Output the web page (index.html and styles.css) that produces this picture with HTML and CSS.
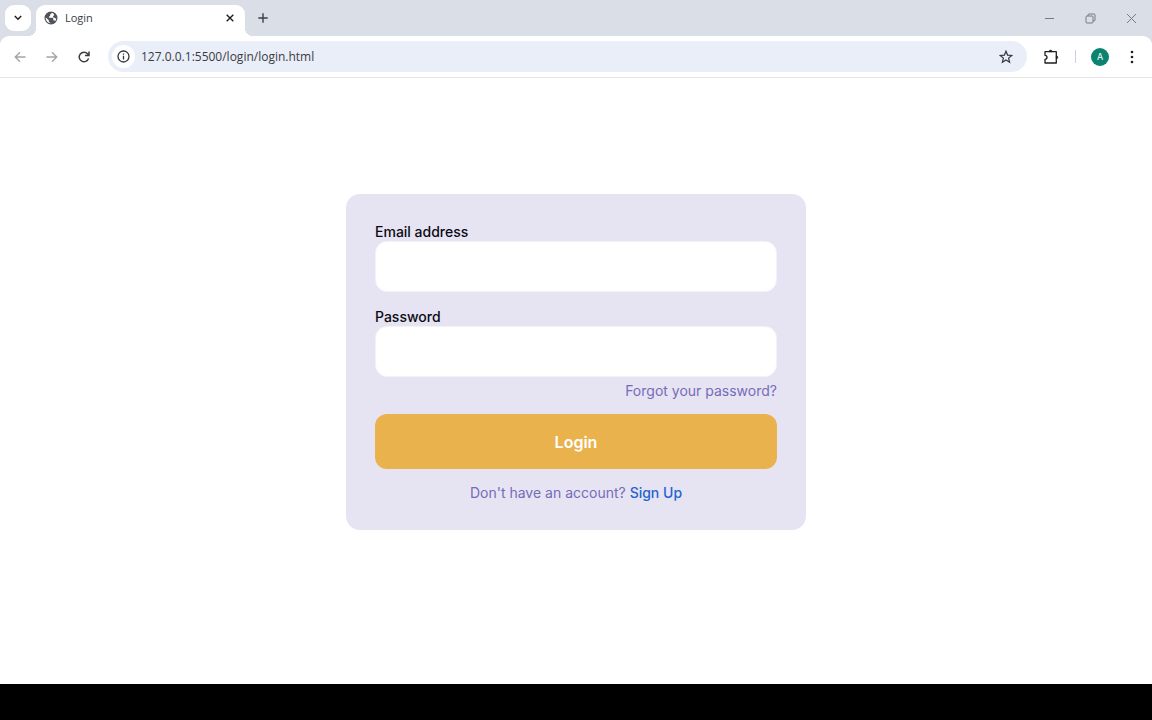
FILE: index.html
```html
<!DOCTYPE html>
<html lang="en">
<head>
<meta charset="utf-8">
<title>Login</title>
<link rel="stylesheet" href="styles.css">
</head>
<body>
<div class="browser">
  <header class="tabstrip">
    <button class="tab-search" aria-label="Search tabs">
      <svg width="8" height="6" viewBox="0 0 8 6" fill="none" stroke="#1f1f1f" stroke-width="1.5"><path d="M.8 1 4 4.2 7.2 1"/></svg>
    </button>
    <div class="tab">
      <svg width="14" height="14" viewBox="0 0 14 14"><circle cx="7" cy="7" r="5.900" fill="#fff" stroke="#505357" stroke-width="1.200"/><path d="M1 7C1 3.500 3.700 1 7.600 1c.3 1.500-.3 2-1.400 2.200v1.300c0 .7-.5.900-1.200.9v1.300h3.200c.7 0 1.100.5 1.100 1.200v1.300c1 0 1.700.2 2.200 1.400C10.300 12.200 8.500 13 7 13c-.7 0-.8-.7-.8-1.500-1 0-1.400-.6-1.400-1.500v-.8L1.300 6ZM9.200 1.600c2.300.9 3.700 2.800 3.800 5.400-.8.900-1.900.7-2.300-.2-.9.100-1.600-.3-1.600-1.200 0-.8.5-1.200 1.200-1.300Z" fill="#505357"/></svg>
      <span class="tab-title">Login</span>
      <button class="icon-btn" aria-label="Close tab">
        <svg width="8" height="8" viewBox="0 0 8 8" stroke="#1f1f1f" stroke-width="1.4"><path d="m.7.7 6.600 6.600M7.300.7.7 7.300"/></svg>
      </button>
    </div>
    <button class="icon-btn new-tab" aria-label="New tab">
      <svg width="10" height="10" viewBox="0 0 10 10" stroke="#3c4043" stroke-width="1.400"><path d="M5 .3v9.400M.3 5h9.400"/></svg>
    </button>
    <div class="window-controls">
      <button class="icon-btn" aria-label="Minimize"><svg width="11" height="11" viewBox="0 0 11 11" stroke="#777b80"><path d="M1 5.500h9"/></svg></button>
      <button class="icon-btn" aria-label="Restore"><svg width="11" height="11" viewBox="0 0 11 11" fill="none" stroke="#777b80"><rect x="1" y="3" width="7" height="7" rx="1"/><path d="M3 3V2a1 1 0 0 1 1-1h5a1 1 0 0 1 1 1v5a1 1 0 0 1-1 1H8"/></svg></button>
      <button class="icon-btn" aria-label="Close"><svg width="11" height="11" viewBox="0 0 11 11" stroke="#777b80"><path d="m1 1 9 9M10 1l-9 9"/></svg></button>
    </div>
  </header>
  <nav class="toolbar">
    <div class="nav-buttons">
      <button class="icon-btn" aria-label="Back"><svg width="12" height="12" viewBox="0 0 12 12" fill="none" stroke="#a2a4a7" stroke-width="1.300"><path d="M11.500 6H1.500M6 1.200 1.200 6 6 10.800"/></svg></button>
      <button class="icon-btn" aria-label="Forward"><svg width="12" height="12" viewBox="0 0 12 12" fill="none" stroke="#a2a4a7" stroke-width="1.300"><path d="M.5 6h10M6 1.200 10.800 6 6 10.800"/></svg></button>
      <button class="icon-btn" aria-label="Reload"><svg width="12" height="12" viewBox="0 0 12 12" fill="none" stroke="#3c3d3f" stroke-width="1.500"><path d="M10.600 7.400A4.800 4.800 0 1 1 9.700 2.900L11 4.300M11 .5v4H7"/></svg></button>
    </div>
    <div class="omnibox">
      <button class="site-info" aria-label="Site information"><svg width="13" height="13" viewBox="0 0 13 13" fill="none" stroke="#343639" stroke-width="1.300"><circle cx="6.500" cy="6.500" r="5.500"/><path d="M6.500 5.800v3.600M6.500 3.400v1.400"/></svg></button>
      <input class="url" type="text" aria-label="Address" value="127.0.0.1:5500/login/login.html">
      <button class="icon-btn" aria-label="Bookmark"><svg width="14" height="14" viewBox="0 0 14 14" fill="none" stroke="#34363b" stroke-width="1.200"><path d="m7 1.200 1.600 3.900 4.200.3-3.200 2.700 1 4.100L7 10l-3.600 2.200 1-4.100L1.200 5.400l4.200-.3Z"/></svg></button>
    </div>
    <div class="toolbar-end">
      <button class="icon-btn" aria-label="Extensions"><svg width="16" height="16" viewBox="0 0 16 16" fill="none" stroke="#1f1f1f" stroke-width="1.300"><path d="M2 2.700h11.300v11.300H2v-3.700a2 2 0 0 0 0-4Z" stroke-linejoin="round"/><path d="M6 2.700a1.600 1.600 0 0 1 3.200 0ZM13.300 6.800a1.500 1.500 0 0 1 0 3Z" fill="#1f1f1f" stroke-width=".6"/></svg></button>
      <span class="divider"></span>
      <button class="avatar" aria-label="Profile">A</button>
      <button class="icon-btn" aria-label="Menu"><svg width="4" height="14" viewBox="0 0 4 14" fill="#1f1f1f"><circle cx="2" cy="2" r="1.300"/><circle cx="2" cy="7" r="1.300"/><circle cx="2" cy="12" r="1.300"/></svg></button>
    </div>
  </nav>
  <main class="page">
    <form class="card">
      <div class="field">
        <label for="email">Email address</label>
        <input id="email" type="email">
      </div>
      <div class="field">
        <label for="password">Password</label>
        <input id="password" type="password">
      </div>
      <a class="forgot" href="#">Forgot your password?</a>
      <button class="submit" type="submit">Login</button>
      <p class="signup">Don't have an account? <a href="#">Sign Up</a></p>
    </form>
  </main>
  <footer class="bottom-bar"></footer>
</div>
</body>
</html>
```
FILE: styles.css
```css
* { box-sizing: border-box; }
body { margin: 0; font-family: Inter, sans-serif; }
button { border: 0; padding: 0; background: none; font-family: inherit; cursor: pointer; }
svg { display: block; }

.browser { min-height: 100vh; display: flex; flex-direction: column; background: #fff; }
.icon-btn { display: grid; place-items: center; width: 20px; height: 20px; flex: none; }

.tabstrip {
  display: flex; align-items: center; height: 36px; padding: 0 11px 0 5px;
  background: #dadfe7; font-family: "Open Sans", sans-serif;
}
.tab-search { display: grid; place-items: center; width: 26px; height: 26px; border-radius: 9px; background: #fff; }
.tab {
  position: relative; align-self: flex-end; display: flex; align-items: center; gap: 7px;
  flex: 0 1 209px; height: 31px; margin-left: 5px; padding: 0 5px 5px 8px;
  border-radius: 9px 9px 0 0; background: #fff;
}
.tab::before, .tab::after { content: ""; position: absolute; bottom: 0; width: 8px; height: 8px; }
.tab::before { right: 100%; background: radial-gradient(circle at 0 0, transparent 8px, #fff 8px); }
.tab::after { left: 100%; background: radial-gradient(circle at 100% 0, transparent 8px, #fff 8px); }
.tab-title { flex: 1; font-size: 11px; line-height: 16px; color: #3a3c40; }
.new-tab { margin-left: 8px; }
.window-controls { display: flex; gap: 21px; margin-left: auto; }

.toolbar {
  position: relative; display: flex; align-items: center; height: 42px; padding: 0 10px;
  border-bottom: 1px solid #e5e5e8; background: linear-gradient(#dadfe7 8px, #fff 8px);
}
.toolbar::before { content: ""; position: absolute; inset: 0; border-radius: 9px 9px 0 0; background: #fff; }
.toolbar > * { position: relative; }
.nav-buttons { display: flex; gap: 12px; margin-right: 14px; }
.omnibox {
  flex: 1; display: flex; align-items: center; height: 31px; padding: 0 11px 0 4px;
  border-radius: 16px; background: #e9eef9;
}
.site-info { display: grid; place-items: center; width: 23px; height: 23px; border-radius: 50%; background: #fff; }
.url {
  flex: 1; min-width: 0; border: 0; padding: 0 0 0 6px; background: none;
  font: 12px/18px "Open Sans", sans-serif; color: #3a3c42; outline: 0;
}
.toolbar-end { display: flex; align-items: center; margin-left: 14px; }
.divider { width: 1px; height: 13px; margin: 0 15px 0 14px; background: #c9d1df; }
.avatar {
  width: 18px; height: 18px; margin-right: 13px; border-radius: 50%;
  background: #0b846f; color: #fff; font-size: 9px; line-height: 18px;
}

.page { flex: 1; display: flex; align-items: center; justify-content: center; padding: 0 16px 38px; }
.card {
  display: flex; flex-direction: column; width: 100%; max-width: 460px; padding: 28px 29px;
  border-radius: 14px; background: #e6e4f2; font-size: 14px; line-height: 19px; color: #0b0a12;
}
.field { display: flex; flex-direction: column; margin-bottom: 15px; font-weight: 500; }
.field input {
  height: 51px; padding: 0 14px; border: 1px solid #f3f2f9; border-radius: 12px;
  background: #fff; font: inherit;
}
.forgot { align-self: flex-end; margin-top: -11px; color: #766bb9; text-decoration: none; }
.submit {
  height: 55px; margin: 14px 0; border-radius: 12px; background: #e9b24d;
  color: #fff; font-size: 16px; font-weight: 600;
}
.signup { margin: 0; text-align: center; color: #766bb9; }
.signup a { color: #2563cf; font-weight: 500; text-decoration: none; }

.bottom-bar { height: 36px; background: #000; }
```
